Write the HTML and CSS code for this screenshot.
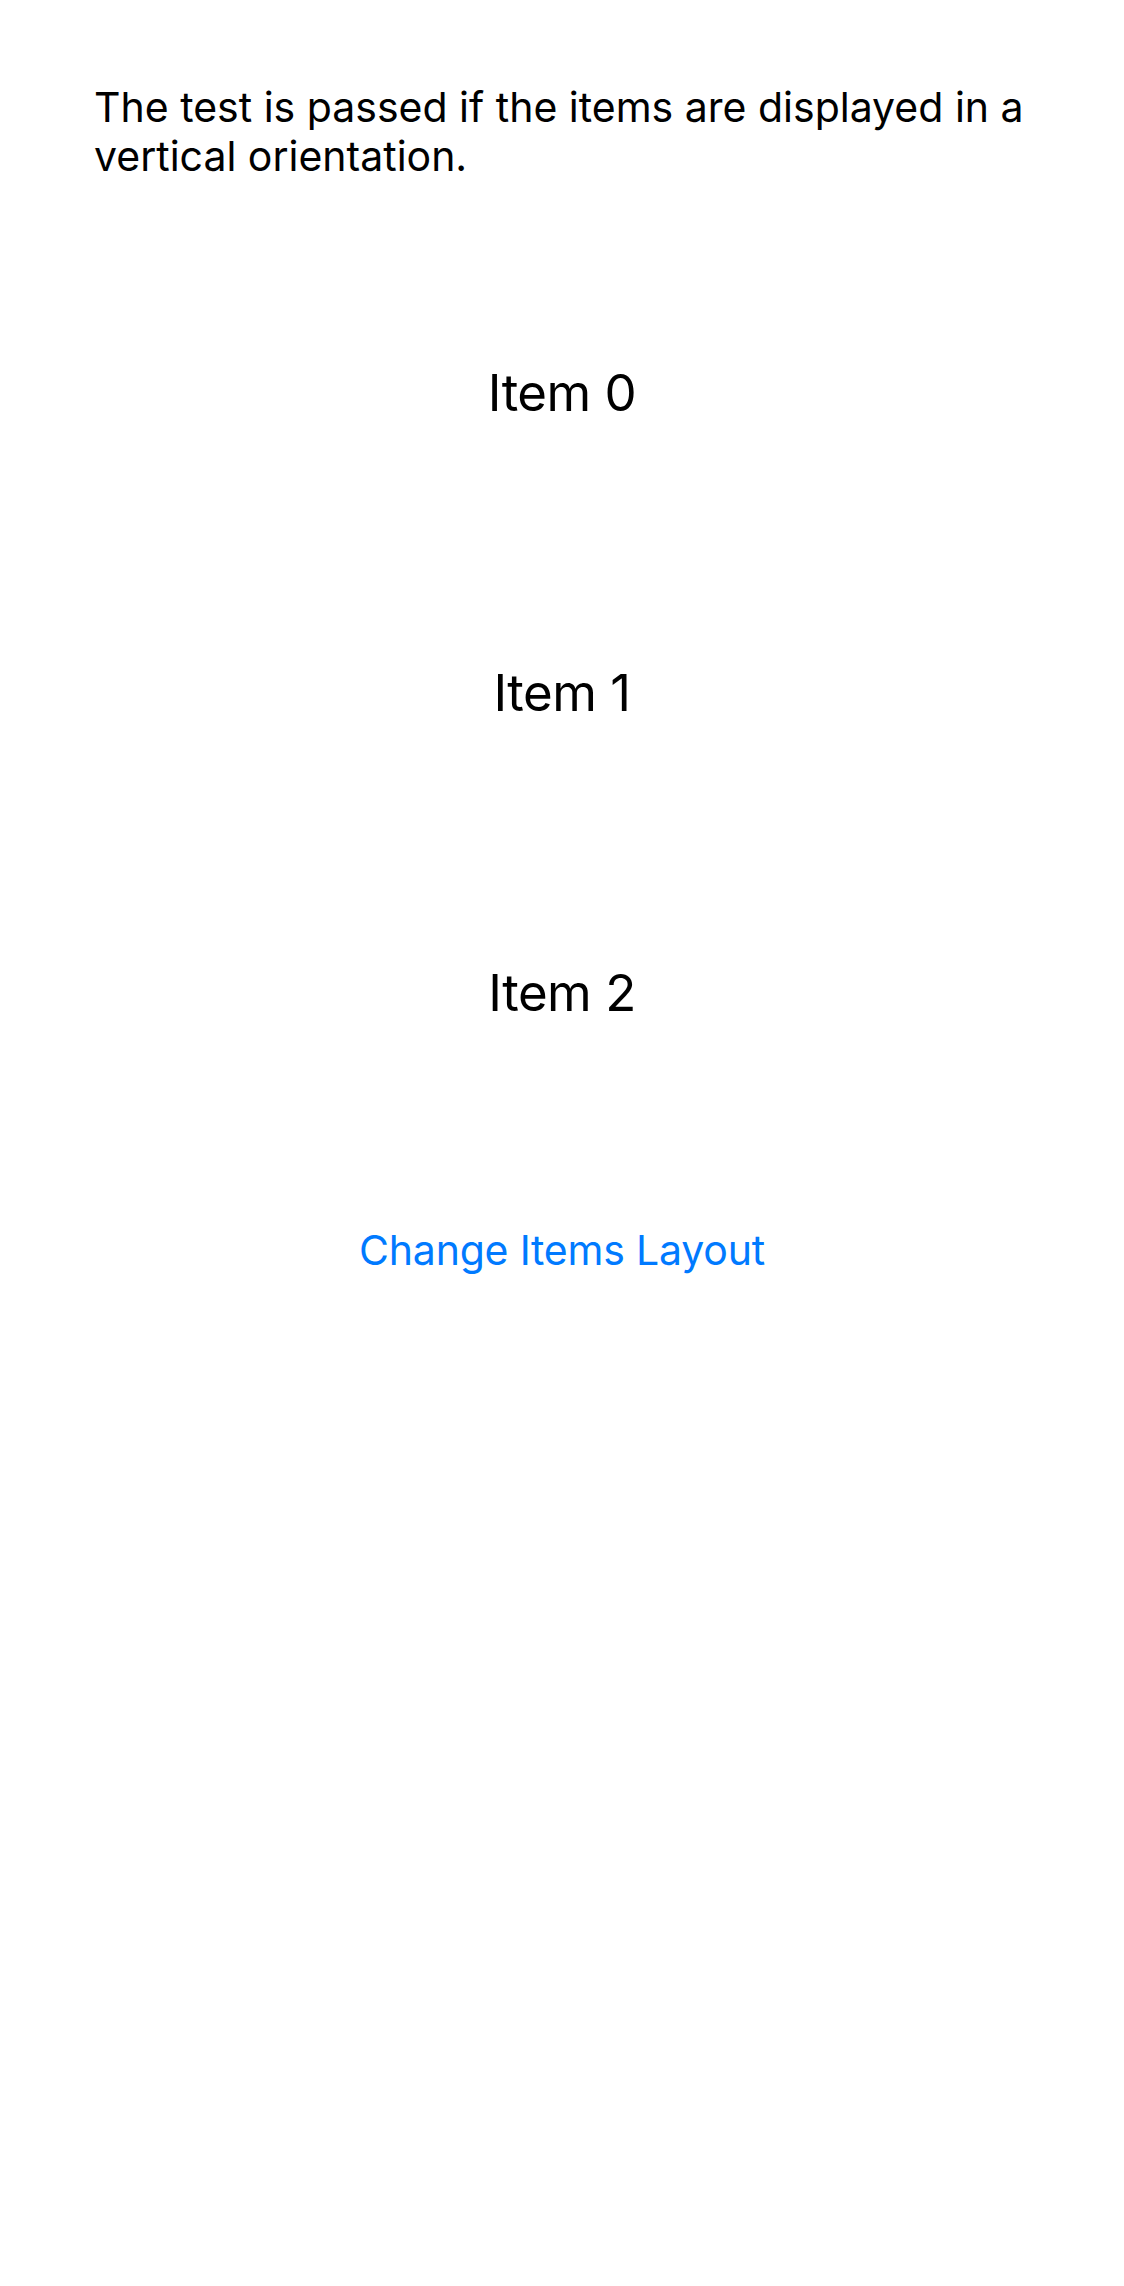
FILE: index.html
```html
<!DOCTYPE html>
<html lang="en">
<head>
<meta charset="utf-8">
<title>Items Layout Test</title>
<link rel="stylesheet" href="styles.css">
</head>
<body>
<main class="screen">
  <p class="description">The test is passed if the items are displayed in a vertical orientation.</p>
  <div class="items">
    <div class="item">Item 0</div>
    <div class="item">Item 1</div>
    <div class="item">Item 2</div>
  </div>
  <div class="actions">
    <button class="link-button" type="button">Change Items Layout</button>
  </div>
</main>
</body>
</html>
```

FILE: styles.css
```css
html, body {
  margin: 0;
  padding: 0;
  background: #ffffff;
}

body {
  font-family: Inter, "Liberation Sans", sans-serif;
  color: #000000;
}

.screen {
  width: 1124px;
  min-height: 2286px;
  display: flex;
  flex-direction: column;
}

.description {
  margin: 0;
  padding: 83px 90px 0 94px;
  font-size: 41px;
  line-height: 49px;
  letter-spacing: 0;
}

.items {
  margin-top: 61px;
  display: flex;
  flex-direction: column;
}

.item {
  height: 300px;
  display: flex;
  align-items: center;
  justify-content: center;
  font-size: 51px;
  letter-spacing: -0.5px;
}

.actions {
  margin-top: 81px;
  display: flex;
  justify-content: center;
}

.link-button {
  border: 0;
  background: transparent;
  padding: 0;
  font-family: Inter, "Liberation Sans", sans-serif;
  font-size: 41px;
  line-height: 54px;
  color: #007aff;
  letter-spacing: -0.2px;
  cursor: pointer;
}
```
